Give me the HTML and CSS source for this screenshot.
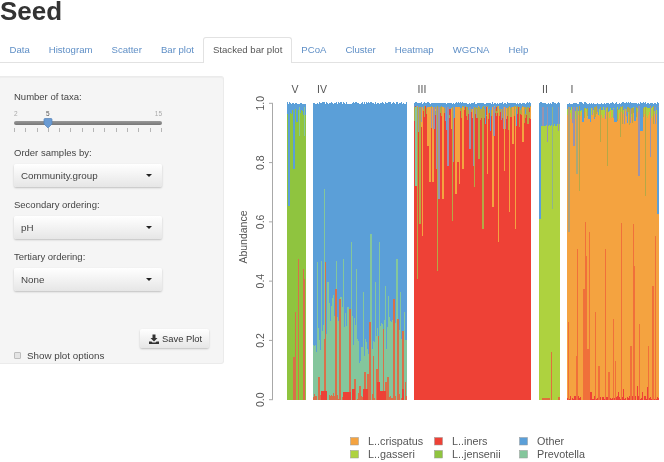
FILE: index.html
```html
<!DOCTYPE html>
<html lang="en">
<head>
    <meta charset="UTF-8">
    <title>Seed</title>
    <link rel="stylesheet" href="styles.css">
</head>
<body>
    <h1>Seed</h1>

    <ul class="tabs">
        <li><a href="#">Data</a></li>
        <li><a href="#">Histogram</a></li>
        <li><a href="#">Scatter</a></li>
        <li><a href="#">Bar plot</a></li>
        <li class="active"><a href="#">Stacked bar plot</a></li>
        <li><a href="#">PCoA</a></li>
        <li><a href="#">Cluster</a></li>
        <li><a href="#">Heatmap</a></li>
        <li><a href="#">WGCNA</a></li>
        <li><a href="#">Help</a></li>
    </ul>

    <div class="main">
        <div class="panel">
            <div class="field-label">Number of taxa:</div>
            <div class="slider-labels">
                <span>2</span>
                <span class="current">5</span>
                <span>15</span>
            </div>
            <div class="slider-track">
                <svg class="slider-handle" width="10" height="11" viewBox="0 0 10 11">
                    <path d="M1 1.5 Q1 .5 2 .5 H8 Q9 .5 9 1.5 V6 L5 10 L1 6 Z" fill="#6a9bd3" stroke="#5583b8" stroke-width=".7"/>
                </svg>
            </div>
            <div class="slider-ticks">
                <i></i><i></i><i></i><i></i><i></i><i></i><i></i><i></i><i></i><i></i><i></i><i></i><i></i><i></i>
            </div>

            <div class="field-label first">Order samples by:</div>
            <div class="select"><span>Community.group</span><b class="caret"></b></div>

            <div class="field-label">Secondary ordering:</div>
            <div class="select"><span>pH</span><b class="caret"></b></div>

            <div class="field-label">Tertiary ordering:</div>
            <div class="select"><span>None</span><b class="caret"></b></div>

            <div class="save-row">
                <div class="save-btn">
                    <svg width="10" height="10" viewBox="0 0 10 10">
                        <path d="M3.5 0.5 H6.5 V4 H8.5 L5 7.5 L1.5 4 H3.5 Z M0 7.5 H2.5 L3.5 8.5 H6.5 L7.5 7.5 H10 V10 H0 Z" fill="#333"/>
                    </svg>
                    Save Plot
                </div>
            </div>
            <label class="check"><span class="box"></span>Show plot options</label>
        </div>

        <svg id="plot" class="plot" width="432" height="386" viewBox="232 76 432 386"></svg>
    </div>

    <script src="plot.js"></script>
</body>
</html>
```

FILE: styles.css
```css
body {
    margin: 0;
    height: 462px;
    overflow: hidden;
    background-color: #fff;
    font-family: "Liberation Sans", Arial, sans-serif;
    font-size: 9.8px;
    color: #444;
    filter: blur(0.35px);
}
h1 {
    margin: 0;
    height: 37px;
    font-size: 26px;
    line-height: 22px;
    font-weight: bold;
    color: #333;
}
.tabs {
    display: flex;
    list-style: none;
    margin: 0;
    padding: 0;
    height: 25px;
    font-size: 9.6px;
    border-bottom: 1px solid #e2e2e2;
}
.tabs a {
    display: block;
    height: 25px;
    line-height: 25px;
    padding: 0 9.5px;
    color: #5f8fc6;
    text-decoration: none;
}
.tabs .active {
    height: 26px;
    box-sizing: border-box;
    border: 1px solid #e2e2e2;
    border-bottom: none;
    border-radius: 3px 3px 0 0;
    background-color: #fff;
}
.tabs .active a {
    height: 24px;
    line-height: 24px;
    padding: 0 8.5px;
    color: #555;
}
.main {
    display: flex;
    padding-top: 13px;
}
.panel {
    box-sizing: border-box;
    width: 224px;
    height: 288px;
    padding: 14px 14px 0;
    flex-shrink: 0;
    background-color: #f5f5f5;
    border: 1px solid #ebebeb;
    border-left: none;
    border-radius: 0 3px 3px 0;
    box-shadow: inset 0 1px 1px rgba(0,0,0,0.03);
}
.field-label {
    height: 12px;
    line-height: 12px;
    margin-top: 12px;
    margin-bottom: 5px;
    font-size: 9.5px;
    color: #444;
}
.panel > .field-label:first-child {
    margin-top: 0;
    margin-bottom: 7px;
}
.field-label.first {
    margin-top: 15px;
}
.slider-labels {
    position: relative;
    height: 8px;
    width: 148px;
    font-size: 6.5px;
    line-height: 8px;
    color: #aaa;
    display: flex;
    justify-content: space-between;
}
.slider-labels .current {
    position: absolute;
    left: 32px;
    color: #555;
}
.slider-track {
    position: relative;
    width: 148px;
    height: 4px;
    margin-top: 3px;
    border-radius: 2px;
    background: linear-gradient(#999, #777);
}
.slider-handle {
    position: absolute;
    left: 29px;
    top: -3px;
}
.slider-ticks {
    display: flex;
    justify-content: space-between;
    width: 148px;
    height: 4px;
    margin-top: 3px;
}
.slider-ticks i {
    width: 1px;
    background-color: #b5b5b5;
}
.select {
    box-sizing: border-box;
    display: flex;
    justify-content: space-between;
    align-items: center;
    width: 148px;
    height: 23px;
    padding: 0 10px 0 7px;
    border-radius: 2px;
    background: linear-gradient(#fff, #e6e6e6);
    box-shadow: 0 1px 2px rgba(0,0,0,0.22);
    color: #444;
}
.caret {
    width: 0;
    height: 0;
    border-top: 3px solid #222;
    border-left: 3px solid transparent;
    border-right: 3px solid transparent;
}
.save-row {
    display: flex;
    justify-content: flex-end;
    margin-top: 38px;
}
.save-btn {
    box-sizing: border-box;
    display: flex;
    align-items: center;
    gap: 3px;
    width: 69px;
    height: 19px;
    padding-left: 9px;
    border-radius: 2px;
    background: linear-gradient(#fff, #e6e6e6);
    box-shadow: 0 1px 2px rgba(0,0,0,0.22);
    font-size: 9.4px;
    color: #333;
}
.check {
    display: flex;
    align-items: center;
    height: 12px;
    margin-top: 1px;
    color: #444;
}
.box {
    box-sizing: border-box;
    width: 7px;
    height: 7px;
    margin-right: 6px;
    border: 1px solid #bdbdbd;
    border-radius: 1px;
    background-color: #e4e4e4;
}
.plot {
    display: block;
    margin-left: 8px;
    margin-top: -1px;
    flex-shrink: 0;
}
.plot .bars {
    filter: blur(0.3px);
}
.plot text {
    font-family: "Liberation Sans", Arial, sans-serif;
    font-size: 10.5px;
    fill: #555;
}
.plot .legend-text {
    font-size: 10.8px;
}
```

FILE: plot.js
```js
// colours of the taxa
const RED = '#ee4136', ORANGE = '#f4a340', GASSERI = '#aed23f', JENSENII = '#8fc43f';
const BLUE = '#5b9fd8', PREVO = '#84c69c', MIX = '#9a93ad', OLIVE = '#b5a845', BRICK = '#d9704a';
const BOTTOM = 400.7;
const svg = document.getElementById('plot');

let seed = 12345;
function rnd() {
    seed = (seed * 16807) % 2147483647;
    return seed / 2147483647;
}

function el(name, attrs, text) {
    const node = document.createElementNS('http://www.w3.org/2000/svg', name);
    for (const k in attrs) node.setAttribute(k, attrs[k]);
    if (text) node.textContent = text;
    return node;
}

// zoomed crop coordinates to page pixels
const top5 = (x, y) => [230 + x / 3, 80 + y / 3];   // upper left
const low6 = (x, y) => [230 + x / 3, 250 + y / 3];  // lower left
const top7 = (x, y) => [450 + x / 3, 80 + y / 3];   // upper right
const low8 = (x, y) => [450 + x / 3, 250 + y / 3];  // lower right

const bars = el('g', { class: 'bars', 'shape-rendering': 'crispEdges' });
svg.appendChild(bars);

function rect(x, y0, y1, w, color) {
    bars.appendChild(el('rect', { x: x, y: y0, width: w, height: y1 - y0, fill: color }));
}

// layers are painted back to front, each from its top down to the baseline
function column(x0, x1, layers) {
    for (let x = x0; x < x1; x++) {
        layers.forEach(l => {
            const base = typeof l.top === 'function' ? l.top(x) : l.top;
            const y = base + (rnd() - 0.5) * (l.jitter || 0);
            rect(x, y, BOTTOM, 1, l.color);
        });
    }
}

function lerp(points) {
    return x => {
        for (let i = 1; i < points.length; i++) {
            if (x <= points[i][0]) {
                const [ax, ay] = points[i - 1], [bx, by] = points[i];
                return ay + (by - ay) * (x - ax) / (bx - ax);
            }
        }
        return points[points.length - 1][1];
    };
}

// red spikes rising from the baseline
function spikes(conv, list, color) {
    list.forEach(([zx, zy, w]) => {
        const [x, y] = conv(zx, zy);
        rect(Math.round(x), y, BOTTOM, w || 1, color || RED);
    });
}

// dips hanging down from the top of a block
function dips(conv, from, list) {
    list.forEach(([zx, zy, color, w]) => {
        const [x, y] = conv(zx, zy);
        rect(Math.round(x), from, y, w || 1, color);
    });
}

// short coloured runs under the top edge of a block
function fringe(x0, x1, from, depth, colors) {
    for (let x = x0; x < x1; x++) {
        if (rnd() < 0.55) {
            const c = colors[Math.floor(rnd() * colors.length)];
            rect(x, from + rnd() * 3, from + 3 + rnd() * depth, 1, c);
        }
    }
}

// V
column(287, 306, [
    { color: BLUE, top: 104, jitter: 1.5 },
    { color: JENSENII, top: 113, jitter: 7 }
]);
dips(top5, 108, [[174, 380, BLUE, 2], [190, 270, BLUE, 2], [207, 170, PREVO], [222, 170, PREVO], [198, 130, BLUE, 2]]);
spikes(low6, [[190, 325, 2], [195, 190], [203, 30], [219, 90, 2], [218, 60]], BRICK);

// IV
column(313, 407, [
    { color: BLUE, top: 104, jitter: 2.5 },
    {
        color: PREVO,
        jitter: 36,
        top: lerp([[313, 360], [320, 335], [330, 312], [340, 312], [350, 318], [358, 350], [363, 345], [373, 335], [383, 340], [390, 325], [397, 322], [407, 350]])
    },
    { color: BRICK, top: 397, jitter: 7 }
]);
spikes(low6, [[262, 40], [272, 35], [290, 100, 2], [318, 35], [330, 145, 2], [340, 30], [352, 175, 2], [378, 60], [400, 130], [435, 100], [448, -20], [465, 110], [475, 140], [497, 30, 2], [510, 130], [522, 190]], PREVO);
spikes(top5, [[283, 330], [364, 490], [419, 465, 2]], PREVO);
spikes(low6, [[265, 385, 2], [282, 270, 2], [284, 40], [315, 120, 2], [328, 150, 2], [357, 180, 2], [372, 390, 2], [388, 410, 2], [402, 370, 2], [410, 375, 2], [418, 220, 2], [428, 320], [438, 360, 2], [445, 260], [458, 240], [465, 400, 2], [472, 385, 2], [490, 150, 2], [500, 210, 2], [517, 245, 2], [524, 400]], BRICK);
spikes(low6, [[272, 425, 6], [340, 430, 8], [365, 420, 3], [398, 420, 5], [440, 400, 3], [450, 425, 6], [515, 420, 2]], RED);

// III
column(414, 531, [
    { color: BLUE, top: 104, jitter: 1.5 },
    { color: OLIVE, top: 109, jitter: 4 },
    { color: RED, top: 116, jitter: 10 }
]);
fringe(414, 531, 107, 26, [MIX, ORANGE, OLIVE, BLUE, RED]);
dips(top5, 108, [[555, 320, PREVO, 2], [560, 160, MIX, 2], [566, 435, OLIVE, 2], [573, 130, MIX, 2], [577, 470, ORANGE], [590, 200, ORANGE, 2], [596, 310, ORANGE, 2], [605, 310, ORANGE, 2], [610, 150, MIX, 2], [618, 270, MIX, 2], [625, 360, MIX, 2], [637, 360, ORANGE, 2], [650, 260, MIX, 2]]);
dips(low6, 108, [[560, 90, OLIVE], [622, 65, OLIVE]]);
dips(top7, 108, [[5, 250, MIX, 2], [5, 425, OLIVE], [15, 345, ORANGE, 2], [20, 250, ORANGE, 2], [28, 315, ORANGE], [37, 270, ORANGE, 2], [58, 210, MIX, 2], [68, 260, MIX, 2], [72, 325, OLIVE], [85, 240, OLIVE, 2], [97, 450, OLIVE, 2], [110, 285, ORANGE], [125, 385, ORANGE, 2], [130, 170, MIX, 2], [145, 490, ORANGE], [160, 150, MIX, 3], [163, 275, ORANGE], [178, 400, ORANGE], [185, 195, ORANGE, 2], [195, 450, ORANGE], [215, 190, ORANGE, 2], [232, 135, OLIVE, 2]]);

// II
column(539, 560, [
    { color: BLUE, top: 104, jitter: 2 },
    { color: GASSERI, top: 126, jitter: 3 }
]);
dips(top7, 108, [[267, 420, BLUE, 2], [276, 140, MIX, 2], [290, 190, MIX], [305, 390, '#8fb48a', 1], [325, 155, MIX]]);
spikes(low8, [[302, 310], [325, 445, 2], [275, 447, 8]], '#e0703c');

// I
column(567, 659, [
    { color: BLUE, top: 104, jitter: 2 },
    { color: GASSERI, top: 110, jitter: 4 },
    { color: ORANGE, top: 116, jitter: 8 },
    { color: RED, top: 399, jitter: 5 }
]);
fringe(567, 659, 107, 16, [MIX, OLIVE, OLIVE, BLUE]);
dips(top7, 108, [[355, 460, '#b0a07a', 2], [370, 200, MIX, 2], [378, 285, '#a8a878', 2], [388, 335, OLIVE], [395, 130, BLUE, 2], [415, 120, BLUE, 2], [432, 115, OLIVE, 2], [450, 190, OLIVE], [470, 260, OLIVE], [495, 130, BLUE, 2], [510, 175, OLIVE], [530, 100, OLIVE, 2], [553, 125, BLUE, 2], [563, 290, MIX, 2], [570, 155, BLUE, 3], [585, 350, OLIVE], [600, 235, MIX], [622, 405, BLUE, 2]]);
spikes(top7, [[406, 430], [418, 460], [512, 432], [548, 436], [616, 470]], '#f0703a');
spikes(low8, [[355, 220], [380, 0], [378, 320, 2], [398, 120, 2], [405, 20, 2], [410, 300, 2], [435, 190], [443, 350, 2], [465, 0], [475, 370, 2], [490, 210], [495, 335], [540, 290, 2], [552, 50], [568, 225], [595, 290], [605, 110, 2]], '#f0703a');
spikes(low8, [[420, 430, 2], [505, 430], [520, 420], [560, 410], [575, 430], [590, 415]]);

// axis
svg.appendChild(el('line', { x1: 272.5, x2: 272.5, y1: 104.3, y2: 400.7, stroke: '#a8a8a8' }));
[1, 0.8, 0.6, 0.4, 0.2, 0].forEach(v => {
    const y = BOTTOM - v * 296.4;
    svg.appendChild(el('line', { x1: 269, x2: 273, y1: y, y2: y, stroke: '#a8a8a8' }));
    svg.appendChild(el('text', { x: 264, y: y, 'text-anchor': 'middle', transform: `rotate(-90 264 ${y})` }, v.toFixed(1)));
});
svg.appendChild(el('text', { x: 247, y: 238, 'text-anchor': 'middle', transform: 'rotate(-90 247 238)' }, 'Abundance'));

// group labels
[['V', 295], ['IV', 322], ['III', 422], ['II', 545], ['I', 572]].forEach(([t, x]) => {
    svg.appendChild(el('text', { x: x, y: 94, 'text-anchor': 'middle' }, t));
});

// legend
[
    ['L..crispatus', ORANGE, 350, 368, 442],
    ['L..gasseri', GASSERI, 350, 368, 455],
    ['L..iners', RED, 434, 452, 442],
    ['L..jensenii', JENSENII, 434, 452, 455],
    ['Other', BLUE, 519, 537, 442],
    ['Prevotella', PREVO, 519, 537, 455]
].forEach(([t, color, sx, tx, y]) => {
    svg.appendChild(el('rect', { x: sx + 0.5, y: y - 3.5, width: 8, height: 7.5, fill: color, stroke: '#999', 'stroke-width': 0.5 }));
    svg.appendChild(el('text', { x: tx, y: y + 4, class: 'legend-text' }, t));
});
```
